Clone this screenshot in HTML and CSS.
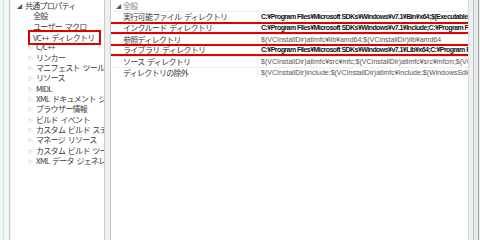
FILE: index.html
```html
<!DOCTYPE html>
<html lang="ja">
<head>
    <meta charset="UTF-8">
    <title>VC++ ディレクトリ</title>
    <link rel="stylesheet" href="styles.css">
</head>
<body>

    <div class="window">
        <div class="edge-left"></div>

        <!-- 左側のツリー -->
        <div class="tree">
            <div class="node root"><span class="arrow open">◢</span>共通プロパティ</div>
            <div class="node leaf">全般</div>
            <div class="node leaf">ユーザー マクロ</div>
            <div class="node leaf"><span class="marked">VC++ ディレクトリ</span></div>
            <div class="node"><span class="arrow">▷</span>C/C++</div>
            <div class="node"><span class="arrow">▷</span>リンカー</div>
            <div class="node"><span class="arrow">▷</span>マニフェスト ツール</div>
            <div class="node"><span class="arrow">▷</span>リソース</div>
            <div class="node"><span class="arrow">▷</span>MIDL</div>
            <div class="node"><span class="arrow">▷</span>XML ドキュメント ジェネレーター</div>
            <div class="node"><span class="arrow">▷</span>ブラウザー情報</div>
            <div class="node"><span class="arrow">▷</span>ビルド イベント</div>
            <div class="node"><span class="arrow">▷</span>カスタム ビルド ステップ</div>
            <div class="node"><span class="arrow">▷</span>マネージ リソース</div>
            <div class="node"><span class="arrow">▷</span>カスタム ビルド ツール</div>
            <div class="node"><span class="arrow">▷</span>XML データ ジェネレーター ツール</div>
        </div>

        <div class="splitter"></div>

        <!-- 右側のプロパティ グリッド -->
        <div class="grid">
            <div class="category"><span class="arrow open">◢</span>全般</div>
            <div class="row">
                <div class="name">実行可能ファイル ディレクトリ</div>
                <div class="value bold">C:¥Program Files¥Microsoft SDKs¥Windows¥v7.1¥Bin¥x64;$(ExecutablePath)</div>
            </div>
            <div class="row hl">
                <div class="name">インクルード ディレクトリ</div>
                <div class="value bold">C:¥Program Files¥Microsoft SDKs¥Windows¥v7.1¥Include;C:¥Program Files¥Microsoft SDKs</div>
            </div>
            <div class="row">
                <div class="name">参照ディレクトリ</div>
                <div class="value">$(VCInstallDir)atlmfc¥lib¥amd64;$(VCInstallDir)lib¥amd64</div>
            </div>
            <div class="row hl">
                <div class="name">ライブラリ ディレクトリ</div>
                <div class="value bold">C:¥Program Files¥Microsoft SDKs¥Windows¥v7.1¥Lib¥x64;C:¥Program Files¥Microsoft SDKs</div>
            </div>
            <div class="row">
                <div class="name">ソース ディレクトリ</div>
                <div class="value">$(VCInstallDir)atlmfc¥src¥mfc;$(VCInstallDir)atlmfc¥src¥mfcm;$(VCInstallDir)atlmfc¥src¥atl</div>
            </div>
            <div class="row">
                <div class="name">ディレクトリの除外</div>
                <div class="value">$(VCInstallDir)include;$(VCInstallDir)atlmfc¥include;$(WindowsSdkDir)include;$(FrameworkSDKDir)</div>
            </div>
        </div>

        <div class="edge-right"></div>
    </div>

</body>
</html>
```

FILE: styles.css
```css
body {
    margin: 0;
    background-color: #ffffff;
    font-family: "Noto Sans CJK JP", "Liberation Sans", sans-serif;
    font-size: 8px;
    letter-spacing: -0.7px;
    word-spacing: 1.5px;
    color: #333;
}

.window {
    display: flex;
    width: 480px;
    height: 240px;
    overflow: hidden;
}

.edge-left {
    width: 11px;
    flex: none;
    background: linear-gradient(to right, #f2f2f2 0 3px, #bfe6ee 3px 4px, #f5f5f5 4px 9px, #c8c8c8 9px 10px, #f0f0f0 10px 11px);
}

.tree {
    width: 93px;
    flex: none;
    padding-top: 1px;
    background-color: #fff;
    border-right: 1px solid #c9c9c9;
    white-space: nowrap;
    overflow: hidden;
}

.node {
    height: 10.35px;
    line-height: 10.35px;
    padding-left: 17px;
    color: #3a3a3a;
}

.node.root {
    padding-left: 6px;
}

.node.leaf {
    padding-left: 22px;
}

.arrow {
    display: inline-block;
    width: 8px;
    font-size: 5px;
    letter-spacing: 0;
    color: #8a8a8a;
    vertical-align: top;
}

.arrow.open {
    color: #555;
}

.marked {
    display: inline-block;
    height: 11px;
    line-height: 11px;
    margin-left: -5px;
    padding: 0 4px 0 3px;
    border: 2px solid #e00000;
    position: relative;
    top: -2px;
}

.splitter {
    width: 5px;
    flex: none;
    background-color: #f0f0f0;
    border-right: 1px solid #c9c9c9;
}

.grid {
    flex: 1;
    background-color: #fff;
    border-right: 1px solid #dadada;
    white-space: nowrap;
    overflow: hidden;
}

.category {
    height: 11px;
    line-height: 11px;
    padding-left: 5px;
    color: #888;
}

.category .arrow {
    width: 7px;
}

.row {
    display: flex;
    height: 9.5px;
    line-height: 9.5px;
    border-top: 1px solid #ededed;
}

.row.hl {
    border-top: 2px solid #e00000;
    border-bottom: 2px solid #e00000;
    height: 8px;
    line-height: 8px;
}

.name {
    width: 134px;
    flex: none;
    padding-left: 12px;
    color: #3a3a3a;
    border-right: 1px solid #ededed;
    overflow: hidden;
}

.value {
    padding-left: 3px;
    font-family: "Liberation Sans", "Noto Sans CJK JP", sans-serif;
    font-size: 7px;
    letter-spacing: 0;
    word-spacing: 0;
    color: #555;
    overflow: hidden;
}

.value.bold {
    font-weight: bold;
    letter-spacing: -0.55px;
    color: #111;
}

.edge-right {
    width: 11px;
    flex: none;
    background: linear-gradient(to right, #efefef 0 4px, #b9b9b9 4px 5px, #f6f6f6 5px 6px, #bfe6ee 6px 7px, #f0f0f0 7px 9px, #9a9a9a 9px 10px, #f0f0f0 10px 11px);
}
```
